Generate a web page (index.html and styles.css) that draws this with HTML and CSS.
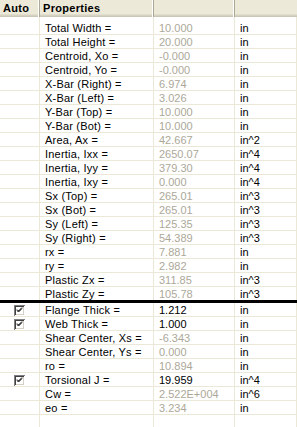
FILE: index.html
```html
<!DOCTYPE html>
<html>
<head>
<meta charset="utf-8">
<link rel="stylesheet" href="styles.css">
</head>
<body>
<div class="grid">
  <div class="row head">
    <div class="hcell">Auto</div>
    <div class="hcell">Properties</div>
    <div class="hcell"></div>
    <div class="hcell last"></div>
  </div>
  <div class="row first"><div class="cell"></div><div class="cell label">Total Width =</div><div class="cell val calc">10.000</div><div class="cell unit">in</div></div>
  <div class="row"><div class="cell"></div><div class="cell label">Total Height =</div><div class="cell val calc">20.000</div><div class="cell unit">in</div></div>
  <div class="row"><div class="cell"></div><div class="cell label">Centroid, Xo =</div><div class="cell val calc">-0.000</div><div class="cell unit">in</div></div>
  <div class="row"><div class="cell"></div><div class="cell label">Centroid, Yo =</div><div class="cell val calc">-0.000</div><div class="cell unit">in</div></div>
  <div class="row"><div class="cell"></div><div class="cell label">X-Bar (Right) =</div><div class="cell val calc">6.974</div><div class="cell unit">in</div></div>
  <div class="row"><div class="cell"></div><div class="cell label">X-Bar (Left) =</div><div class="cell val calc">3.026</div><div class="cell unit">in</div></div>
  <div class="row"><div class="cell"></div><div class="cell label">Y-Bar (Top) =</div><div class="cell val calc">10.000</div><div class="cell unit">in</div></div>
  <div class="row"><div class="cell"></div><div class="cell label">Y-Bar (Bot) =</div><div class="cell val calc">10.000</div><div class="cell unit">in</div></div>
  <div class="row"><div class="cell"></div><div class="cell label">Area, Ax =</div><div class="cell val calc">42.667</div><div class="cell unit">in^2</div></div>
  <div class="row"><div class="cell"></div><div class="cell label">Inertia, Ixx =</div><div class="cell val calc">2650.07</div><div class="cell unit">in^4</div></div>
  <div class="row"><div class="cell"></div><div class="cell label">Inertia, Iyy =</div><div class="cell val calc">379.30</div><div class="cell unit">in^4</div></div>
  <div class="row"><div class="cell"></div><div class="cell label">Inertia, Ixy =</div><div class="cell val calc">0.000</div><div class="cell unit">in^4</div></div>
  <div class="row"><div class="cell"></div><div class="cell label">Sx (Top) =</div><div class="cell val calc">265.01</div><div class="cell unit">in^3</div></div>
  <div class="row"><div class="cell"></div><div class="cell label">Sx (Bot) =</div><div class="cell val calc">265.01</div><div class="cell unit">in^3</div></div>
  <div class="row"><div class="cell"></div><div class="cell label">Sy (Left) =</div><div class="cell val calc">125.35</div><div class="cell unit">in^3</div></div>
  <div class="row"><div class="cell"></div><div class="cell label">Sy (Right) =</div><div class="cell val calc">54.389</div><div class="cell unit">in^3</div></div>
  <div class="row"><div class="cell"></div><div class="cell label">rx =</div><div class="cell val calc">7.881</div><div class="cell unit">in</div></div>
  <div class="row"><div class="cell"></div><div class="cell label">ry =</div><div class="cell val calc">2.982</div><div class="cell unit">in</div></div>
  <div class="row"><div class="cell"></div><div class="cell label">Plastic Zx =</div><div class="cell val calc">311.85</div><div class="cell unit">in^3</div></div>
  <div class="row divider"><div class="cell"></div><div class="cell label">Plastic Zy =</div><div class="cell val calc">105.78</div><div class="cell unit">in^3</div></div>
  <div class="row"><div class="cell check"><svg class="box" width="11" height="11" viewBox="0 0 11 11"><rect x="0" y="0" width="11" height="11" fill="#808080"/><rect x="1" y="1" width="10" height="10" fill="#ffffff"/><rect x="1" y="1" width="9" height="9" fill="#404040"/><rect x="2" y="2" width="8" height="8" fill="#d4d0c8"/><rect x="2" y="2" width="7" height="7" fill="#ffffff"/><path d="M3 4.5 L4.5 6 L8 2.5 M3 5.5 L4.5 7 L8 3.5" stroke="#000" stroke-width="1" fill="none"/></svg></div><div class="cell label">Flange Thick =</div><div class="cell val">1.212</div><div class="cell unit">in</div></div>
  <div class="row"><div class="cell check"><svg class="box" width="11" height="11" viewBox="0 0 11 11"><rect x="0" y="0" width="11" height="11" fill="#808080"/><rect x="1" y="1" width="10" height="10" fill="#ffffff"/><rect x="1" y="1" width="9" height="9" fill="#404040"/><rect x="2" y="2" width="8" height="8" fill="#d4d0c8"/><rect x="2" y="2" width="7" height="7" fill="#ffffff"/><path d="M3 4.5 L4.5 6 L8 2.5 M3 5.5 L4.5 7 L8 3.5" stroke="#000" stroke-width="1" fill="none"/></svg></div><div class="cell label">Web Thick =</div><div class="cell val">1.000</div><div class="cell unit">in</div></div>
  <div class="row"><div class="cell"></div><div class="cell label">Shear Center, Xs =</div><div class="cell val calc">-6.343</div><div class="cell unit">in</div></div>
  <div class="row"><div class="cell"></div><div class="cell label">Shear Center, Ys =</div><div class="cell val calc">0.000</div><div class="cell unit">in</div></div>
  <div class="row"><div class="cell"></div><div class="cell label">ro =</div><div class="cell val calc">10.894</div><div class="cell unit">in</div></div>
  <div class="row"><div class="cell check"><svg class="box" width="11" height="11" viewBox="0 0 11 11"><rect x="0" y="0" width="11" height="11" fill="#808080"/><rect x="1" y="1" width="10" height="10" fill="#ffffff"/><rect x="1" y="1" width="9" height="9" fill="#404040"/><rect x="2" y="2" width="8" height="8" fill="#d4d0c8"/><rect x="2" y="2" width="7" height="7" fill="#ffffff"/><path d="M3 4.5 L4.5 6 L8 2.5 M3 5.5 L4.5 7 L8 3.5" stroke="#000" stroke-width="1" fill="none"/></svg></div><div class="cell label">Torsional J =</div><div class="cell val">19.959</div><div class="cell unit">in^4</div></div>
  <div class="row"><div class="cell"></div><div class="cell label">Cw =</div><div class="cell val calc">2.522E+004</div><div class="cell unit">in^6</div></div>
  <div class="row"><div class="cell"></div><div class="cell label">eo =</div><div class="cell val calc">3.234</div><div class="cell unit">in</div></div>
  <div class="row empty"><div class="cell"></div><div class="cell"></div><div class="cell"></div><div class="cell"></div></div>
</div>
</body>
</html>
```

FILE: styles.css
```css
html, body {
  margin: 0;
  padding: 0;
  background: #ffffff;
}
body {
  width: 297px;
  height: 427px;
  overflow: hidden;
  font-family: "Liberation Sans", Arial, sans-serif;
  font-size: 11px;
  color: #000000;
}
.grid {
  display: flex;
  flex-direction: column;
}
.row {
  display: grid;
  grid-template-columns: 40px 114px 81px 62px;
  border-bottom: 1px solid #ebe8d8;
}
.head {
  height: 17px;
  border-bottom: 0;
  background: #ece9d8;
  box-shadow: inset 0 -1px #cbc7b8, inset 0 -2px #d6d2c2, inset 0 -3px #e2decd;
}
.hcell {
  border-right: 1px solid #aca899;
  box-shadow: inset -1px 0 #ffffff;
  font-weight: bold;
  line-height: 16px;
  padding-left: 3px;
  letter-spacing: 0.3px;
  white-space: nowrap;
}
.hcell.last {
  border-right: 0;
  box-shadow: none;
}
.cell {
  height: 13px;
  line-height: 15px;
  border-right: 1px solid #ebe8d8;
  white-space: nowrap;
  overflow: hidden;
}
.first .cell {
  padding-top: 4px;
}
.label {
  padding-left: 5px;
  letter-spacing: 0.2px;
}
.val {
  padding-left: 5px;
}
.unit {
  padding-left: 5px;
}
.calc {
  color: #aca899;
}
.divider {
  border-bottom: 3px solid #000000;
}
.check {
  display: flex;
  align-items: center;
  justify-content: center;
}
.box {
  display: block;
  margin-top: 1px;
}
.empty .cell {
  height: 20px;
}
```
